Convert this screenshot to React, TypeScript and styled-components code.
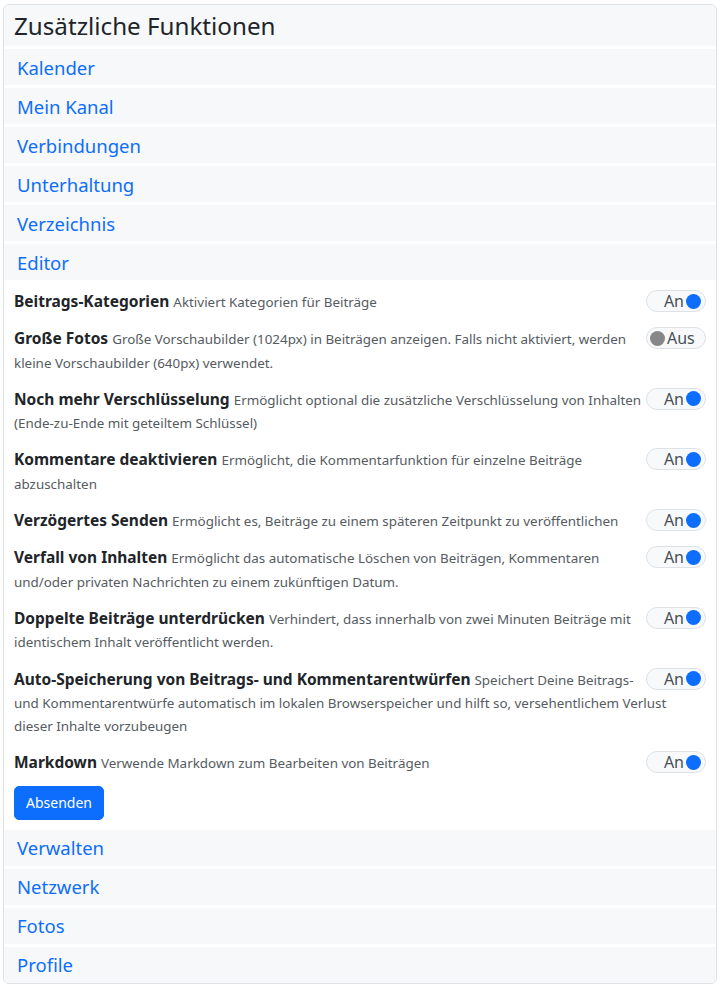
import React from "react";
import styled, { createGlobalStyle } from "styled-components";

const Global = createGlobalStyle`
  html, body { margin: 0; padding: 0; background: #fff; }
  body { font-family: "Noto Sans", "Open Sans", sans-serif; color: #212529; }
`;

const Page = styled.div`
  padding: 4px 4px 0 3px;
`;

const Card = styled.div`
  border: 1px solid #dee2e6;
  border-radius: 6px;
  background: #fff;
  display: flex;
  flex-direction: column;
  gap: 3px;
  overflow: hidden;
`;

const Header = styled.h2`
  margin: 0;
  height: 41px;
  display: flex;
  align-items: center;
  padding: 0 10px;
  background: #f7f8fa;
  font-size: 24.2px;
  font-weight: 400;
  color: #212529;
`;

const SectionBar = styled.div`
  height: 36px;
  display: flex;
  align-items: center;
  padding: 0 13px;
  background: #f7f8fa;
  font-size: 18.5px;
  color: #0d6efd;
`;

const Content = styled.div`
  padding: 7px 10px 7px 10px;
  display: flex;
  flex-direction: column;
  gap: 14px;
  align-items: flex-start;
`;

const Row = styled.div`
  width: 100%;
  font-size: 15.5px;
  line-height: 23.3px;
  &::after {
    content: "";
    display: block;
    clear: both;
  }
`;

const Label = styled.strong`
  font-weight: 700;
  color: #212529;
`;

const Desc = styled.span`
  font-size: 13.4px;
  line-height: 1;
  color: #555b61;
`;

const Toggle = styled.div<{ $on: boolean }>`
  float: right;
  width: 60px;
  height: 22px;
  box-sizing: border-box;
  border: 1px solid #dee2e6;
  border-radius: 11px;
  background: #f8f9fa;
  display: flex;
  align-items: center;
  flex-direction: ${(p) => (p.$on ? "row" : "row-reverse")};
  justify-content: flex-end;
  padding: ${(p) => (p.$on ? "0 4px 0 0" : "0 0 0 3px")};
  gap: 2px;
  font-size: 16px;
  color: #495057;
  line-height: 1;
`;

const Dot = styled.span<{ $on: boolean }>`
  width: 15px;
  height: 15px;
  border-radius: 50%;
  background: ${(p) => (p.$on ? "#0d6efd" : "#878787")};
  flex: none;
`;

const ToggleText = styled.span<{ $on: boolean }>`
  margin-right: ${(p) => (p.$on ? "0" : "auto")};
`;

const Button = styled.button`
  margin-top: -3px;
  font-family: inherit;
  font-size: 14px;
  color: #fff;
  background: #0d6efd;
  border: 1px solid #0d6efd;
  border-radius: 5px;
  padding: 0 11px;
  height: 34px;
  cursor: pointer;
`;

const features: { label: string; desc: string; on: boolean }[] = [
  { label: "Beitrags-Kategorien", desc: "Aktiviert Kategorien für Beiträge", on: true },
  {
    label: "Große Fotos",
    desc: "Große Vorschaubilder (1024px) in Beiträgen anzeigen. Falls nicht aktiviert, werden kleine Vorschaubilder (640px) verwendet.",
    on: false,
  },
  {
    label: "Noch mehr Verschlüsselung",
    desc: "Ermöglicht optional die zusätzliche Verschlüsselung von Inhalten (Ende-zu-Ende mit geteiltem Schlüssel)",
    on: true,
  },
  {
    label: "Kommentare deaktivieren",
    desc: "Ermöglicht, die Kommentarfunktion für einzelne Beiträge abzuschalten",
    on: true,
  },
  {
    label: "Verzögertes Senden",
    desc: "Ermöglicht es, Beiträge zu einem späteren Zeitpunkt zu veröffentlichen",
    on: true,
  },
  {
    label: "Verfall von Inhalten",
    desc: "Ermöglicht das automatische Löschen von Beiträgen, Kommentaren und/oder privaten Nachrichten zu einem zukünftigen Datum.",
    on: true,
  },
  {
    label: "Doppelte Beiträge unterdrücken",
    desc: "Verhindert, dass innerhalb von zwei Minuten Beiträge mit identischem Inhalt veröffentlicht werden.",
    on: true,
  },
  {
    label: "Auto-Speicherung von Beitrags- und Kommentarentwürfen",
    desc: "Speichert Deine Beitrags- und Kommentarentwürfe automatisch im lokalen Browserspeicher und hilft so, versehentlichem Verlust dieser Inhalte vorzubeugen",
    on: true,
  },
  { label: "Markdown", desc: "Verwende Markdown zum Bearbeiten von Beiträgen", on: true },
];

const before = ["Kalender", "Mein Kanal", "Verbindungen", "Unterhaltung", "Verzeichnis", "Editor"];
const after = ["Verwalten", "Netzwerk", "Fotos", "Profile"];

export default function App() {
  return (
    <Page>
      <Global />
      <Card>
        <Header>Zusätzliche Funktionen</Header>
        {before.map((s) => (
          <SectionBar key={s}>{s}</SectionBar>
        ))}
        <Content>
          {features.map((f) => (
            <Row key={f.label}>
              <Toggle $on={f.on}>
                <ToggleText $on={f.on}>{f.on ? "An" : "Aus"}</ToggleText>
                <Dot $on={f.on} />
              </Toggle>
              <Label>{f.label}</Label> <Desc>{f.desc}</Desc>
            </Row>
          ))}
          <Button>Absenden</Button>
        </Content>
        {after.map((s) => (
          <SectionBar key={s}>{s}</SectionBar>
        ))}
      </Card>
    </Page>
  );
}
